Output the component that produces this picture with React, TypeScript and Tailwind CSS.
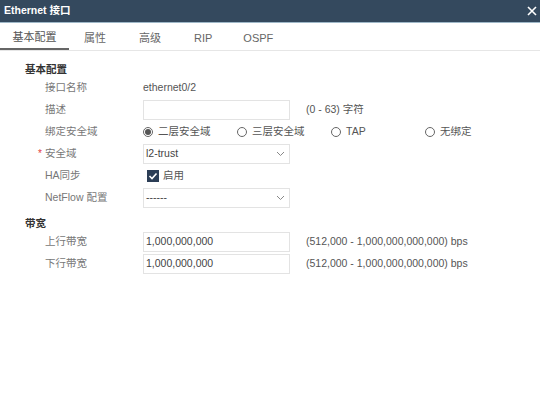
import React from 'react';

const font = { fontFamily: '"Liberation Sans", Arial, "Noto Sans CJK SC", sans-serif' };

function Chevron() {
  return (
    <svg width="9" height="6" viewBox="0 0 9 6" className="text-[#888]">
      <path d="M1 1l3.5 3.5L8 1" fill="none" stroke="currentColor" strokeWidth="1" />
    </svg>
  );
}

function Radio({ checked, label }: { checked?: boolean; label: string }) {
  return (
    <div className="flex items-center w-[94px] shrink-0">
      <span className="w-[10px] h-[10px] rounded-full border border-[#666] flex items-center justify-center">
        {checked && <span className="w-[6px] h-[6px] rounded-full bg-[#555]" />}
      </span>
      <span className="ml-[5px] text-[#555]">{label}</span>
    </div>
  );
}

function Row({ label, required, children }: { label: string; required?: boolean; children: React.ReactNode }) {
  return (
    <div className="flex items-center h-[22px]">
      <div className="w-[98px] shrink-0 text-[#777] relative">
        {required && <span className="absolute -left-[7px] top-0 text-[#e4393c] text-[10px]">*</span>}
        {label}
      </div>
      {children}
    </div>
  );
}

function TextBox({ value }: { value?: string }) {
  return (
    <div className="w-[147px] h-[20px] border border-[#e3e3e3] bg-white flex items-center px-[2px] text-[#444]">
      {value}
    </div>
  );
}

function Select({ value }: { value: string }) {
  return (
    <div className="w-[147px] h-[20px] border border-[#e3e3e3] bg-white flex items-center justify-between pl-[2px] pr-[4px] text-[#444]">
      <span>{value}</span>
      <Chevron />
    </div>
  );
}

export default function App() {
  const tabs = ['基本配置', '属性', '高级', 'RIP', 'OSPF'];
  const tabGap = [0, 15, 33, 33, 31];
  return (
    <div className="w-[540px] h-[400px] bg-white text-[10.5px] overflow-hidden" style={font}>
      {/* Title bar */}
      <header className="h-[23px] bg-[#34495e] flex items-center justify-between pl-[4px] pr-[3px] border-b border-[#9fb8c8]">
        <span className="text-white font-bold text-[10.5px]">Ethernet 接口</span>
        <svg width="10" height="10" viewBox="0 0 10 10">
          <path d="M1 1l8 8M9 1l-8 8" stroke="#fff" strokeWidth="1.6" />
        </svg>
      </header>

      {/* Tabs */}
      <nav className="h-[28px] flex items-end border-b border-[#e6e6e6]">
        {tabs.map((t, i) => (
          <div
            key={t}
            className={
              i === 0
                ? 'w-[69px] h-full flex items-center justify-center border-b-2 border-[#666] text-[#555] text-[11px] pt-[3px]'
                : 'h-full flex items-center text-[#666] text-[11px] pt-[3px]'
            }
            style={i === 0 ? undefined : { marginLeft: tabGap[i] }}
          >
            {t}
          </div>
        ))}
      </nav>

      {/* Content */}
      <main className="pl-[25px] pt-[12px]">
        <div className="h-[14px] flex items-center font-bold text-[#333]">基本配置</div>
        <div className="pl-[20px]">
          <Row label="接口名称">
            <span className="text-[#555]">ethernet0/2</span>
          </Row>
          <Row label="描述">
            <TextBox />
            <span className="ml-[16px] text-[#555]">(0 - 63) 字符</span>
          </Row>
          <Row label="绑定安全域">
            <Radio checked label="二层安全域" />
            <Radio label="三层安全域" />
            <Radio label="TAP" />
            <Radio label="无绑定" />
          </Row>
          <Row label="安全域" required>
            <Select value="l2-trust" />
          </Row>
          <Row label="HA同步">
            <div className="flex items-center pl-[4px]">
              <span className="w-[12px] h-[12px] bg-[#2c3e56] flex items-center justify-center">
                <svg width="10" height="10" viewBox="0 0 10 10">
                  <path d="M1.5 5l2.5 2.5L8.5 2.5" fill="none" stroke="#fff" strokeWidth="1.6" />
                </svg>
              </span>
              <span className="ml-[4px] text-[#555]">启用</span>
            </div>
          </Row>
          <Row label="NetFlow 配置">
            <Select value="------" />
          </Row>
        </div>

        <div className="h-[14px] mt-[8px] flex items-center font-bold text-[#333]">带宽</div>
        <div className="pl-[20px]">
          <Row label="上行带宽">
            <TextBox value="1,000,000,000" />
            <span className="ml-[16px] text-[#555]">(512,000 - 1,000,000,000,000) bps</span>
          </Row>
          <Row label="下行带宽">
            <TextBox value="1,000,000,000" />
            <span className="ml-[16px] text-[#555]">(512,000 - 1,000,000,000,000) bps</span>
          </Row>
        </div>
      </main>
    </div>
  );
}
